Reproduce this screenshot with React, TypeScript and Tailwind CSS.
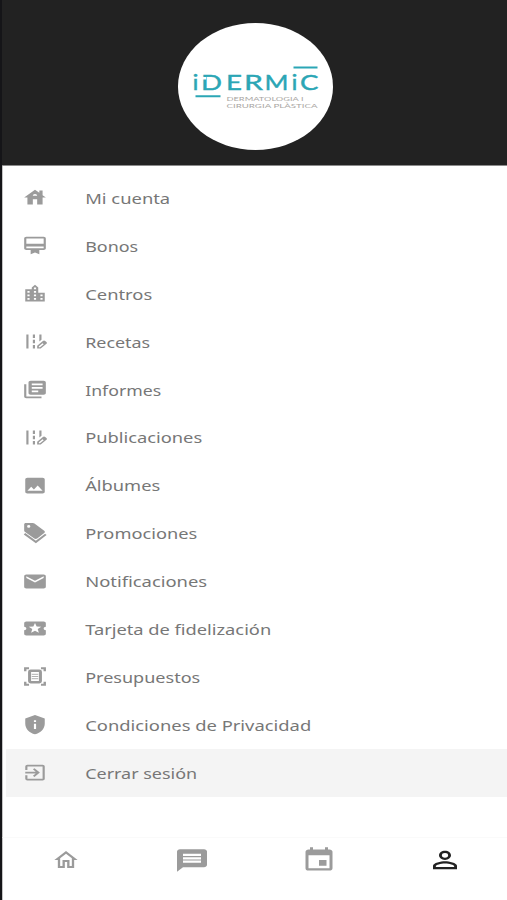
import type { ReactNode } from "react";
import type { IconType } from "react-icons";
import {
  MdCardMembership,
  MdEditRoad,
  MdEmail,
  MdEvent,
  MdExitToApp,
  MdHouse,
  MdImage,
  MdLibraryBooks,
  MdLocalActivity,
  MdLocationCity,
  MdMessage,
  MdOutlineHome,
  MdPersonOutline,
  MdPrivacyTip,
} from "react-icons/md";

type MenuItem = {
  label: string;
  icon: ReactNode;
  // rendered width of the label in px
  width: number;
};

function MenuIcon({ icon: Icon }: { icon: IconType }) {
  return <Icon preserveAspectRatio="none" className="h-[21px] w-[26px]" />;
}

function TagsIcon() {
  return (
    <svg
      viewBox="0 0 24 24"
      preserveAspectRatio="none"
      fill="currentColor"
      className="h-[21px] w-[26px]"
    >
      <path
        fillRule="evenodd"
        d="M3.500 0h6.500c.6 0 1.100.2 1.500.6l9 8.200c.8.8.8 1.900 0 2.700l-6.500 6.200c-.8.7-1.900.7-2.700 0L2.600 10c-.4-.4-.6-.9-.6-1.500V1.500C2 .7 2.700 0 3.500 0zm2.700 2.400a1.500 1.500 0 1 0 0 3 1.500 1.500 0 0 0 0-3z"
      />
      <path d="M2.300 12.300l10.500 9.400 9.200-8.700" fill="none" stroke="currentColor" strokeWidth="2" />
    </svg>
  );
}

function ScanIcon() {
  return (
    <svg
      viewBox="0 0 24 24"
      preserveAspectRatio="none"
      fill="none"
      stroke="currentColor"
      className="h-[21px] w-[26px]"
    >
      <path d="M3 6V2.500h3.500M17.500 2.500H21V6M21 18v3.500h-3.500M6.500 21.500H3V18" strokeWidth="2.200" />
      <rect x="7" y="5.500" width="10" height="13" rx="1" strokeWidth="2.800" />
      <path d="M9 9.500h6M9 12h6M9 14.500h6" strokeWidth="0.800" />
    </svg>
  );
}

const items: MenuItem[] = [
  { label: "Mi cuenta", icon: <MenuIcon icon={MdHouse} />, width: 85 },
  { label: "Bonos", icon: <MenuIcon icon={MdCardMembership} />, width: 53 },
  { label: "Centros", icon: <MenuIcon icon={MdLocationCity} />, width: 67 },
  { label: "Recetas", icon: <MenuIcon icon={MdEditRoad} />, width: 65 },
  { label: "Informes", icon: <MenuIcon icon={MdLibraryBooks} />, width: 76 },
  { label: "Publicaciones", icon: <MenuIcon icon={MdEditRoad} />, width: 117 },
  { label: "Álbumes", icon: <MenuIcon icon={MdImage} />, width: 75 },
  { label: "Promociones", icon: <TagsIcon />, width: 112 },
  { label: "Notificaciones", icon: <MenuIcon icon={MdEmail} />, width: 122 },
  { label: "Tarjeta de fidelización", icon: <MenuIcon icon={MdLocalActivity} />, width: 186 },
  { label: "Presupuestos", icon: <ScanIcon />, width: 115 },
  { label: "Condiciones de Privacidad", icon: <MenuIcon icon={MdPrivacyTip} />, width: 226 },
  { label: "Cerrar sesión", icon: <MenuIcon icon={MdExitToApp} />, width: 112 },
];

const letters = [
  { char: "i", x: 14.5, width: 6 },
  { char: "D", x: 23, width: 21 },
  { char: "E", x: 48, width: 16 },
  { char: "R", x: 66, width: 19 },
  { char: "M", x: 86.5, width: 24 },
  { char: "i", x: 113.5, width: 6 },
  { char: "C", x: 122, width: 18.5 },
];

function Logo() {
  return (
    <svg viewBox="0 0 155 127" className="ml-0.5 h-[127px] w-[155px]">
      <ellipse cx="77.5" cy="63.500" rx="77.5" ry="63.500" fill="#fff" />
      <g
        fill="#2ba6b5"
        stroke="#2ba6b5"
        strokeWidth="0.4"
        fontSize="22"
        fontFamily="Lato, sans-serif"
      >
        {letters.map(({ char, x, width }) => (
          <text key={x} x={x} y="66.5" textLength={width} lengthAdjust="spacingAndGlyphs">
            {char}
          </text>
        ))}
      </g>
      <path d="M26 54v2.500" stroke="#fff" strokeWidth="4.500" />
      <path d="M17.500 73.200h25M115.500 44.500h24" stroke="#2ba6b5" strokeWidth="2" />
      <g fill="#aaa7a4" fontSize="6.500" fontFamily="Lato, sans-serif">
        <text x="48.500" y="77.500" textLength="77" lengthAdjust="spacingAndGlyphs">
          DERMATOLOGIA I
        </text>
        <text x="48.500" y="84.500" textLength="91" lengthAdjust="spacingAndGlyphs">
          CIRURGIA PLÀSTICA
        </text>
      </g>
    </svg>
  );
}

function MenuRow({ item, active }: { item: MenuItem; active: boolean }) {
  return (
    <li
      className={`ml-[3px] flex h-[47.9px] items-center pl-4 text-[#9b9b9b] ${active ? "bg-[#f4f4f4]" : ""}`}
    >
      <span className="w-[62px]">{item.icon}</span>
      <svg className="h-6 w-[240px] overflow-visible">
        <text
          x="1.200"
          y="18.300"
          fill="#777"
          fontSize="15.200"
          textLength={item.width}
          lengthAdjust="spacingAndGlyphs"
        >
          {item.label}
        </text>
      </svg>
    </li>
  );
}

export default function App() {
  return (
    <div className="flex h-[900px] w-[507px] flex-col overflow-hidden border-l-2 border-[#151518] bg-white font-['Noto_Sans',sans-serif]">
      <header className="flex h-[166px] shrink-0 justify-center border-b border-[#8b8b8b] bg-[#222] pt-[23px]">
        <Logo />
      </header>

      <ul className="flex-1 border-l border-[#c4c4c4] pt-2">
        {items.map((item, i) => (
          <MenuRow key={item.label} item={item} active={i === items.length - 1} />
        ))}
      </ul>

      <nav className="-mr-px grid h-[63px] grid-cols-4 items-start justify-items-center border-t border-l border-t-[#fafafa] border-l-[#c4c4c4] pt-2 text-[#9b9b9b]">
        <MdOutlineHome preserveAspectRatio="none" className="mt-0.5 h-6 w-7" />
        <MdMessage preserveAspectRatio="none" className="mt-px h-[27px] w-9" />
        <MdEvent preserveAspectRatio="none" className="h-7 w-9" />
        <MdPersonOutline preserveAspectRatio="none" className="h-7 w-9 text-[#222]" />
      </nav>
    </div>
  );
}
